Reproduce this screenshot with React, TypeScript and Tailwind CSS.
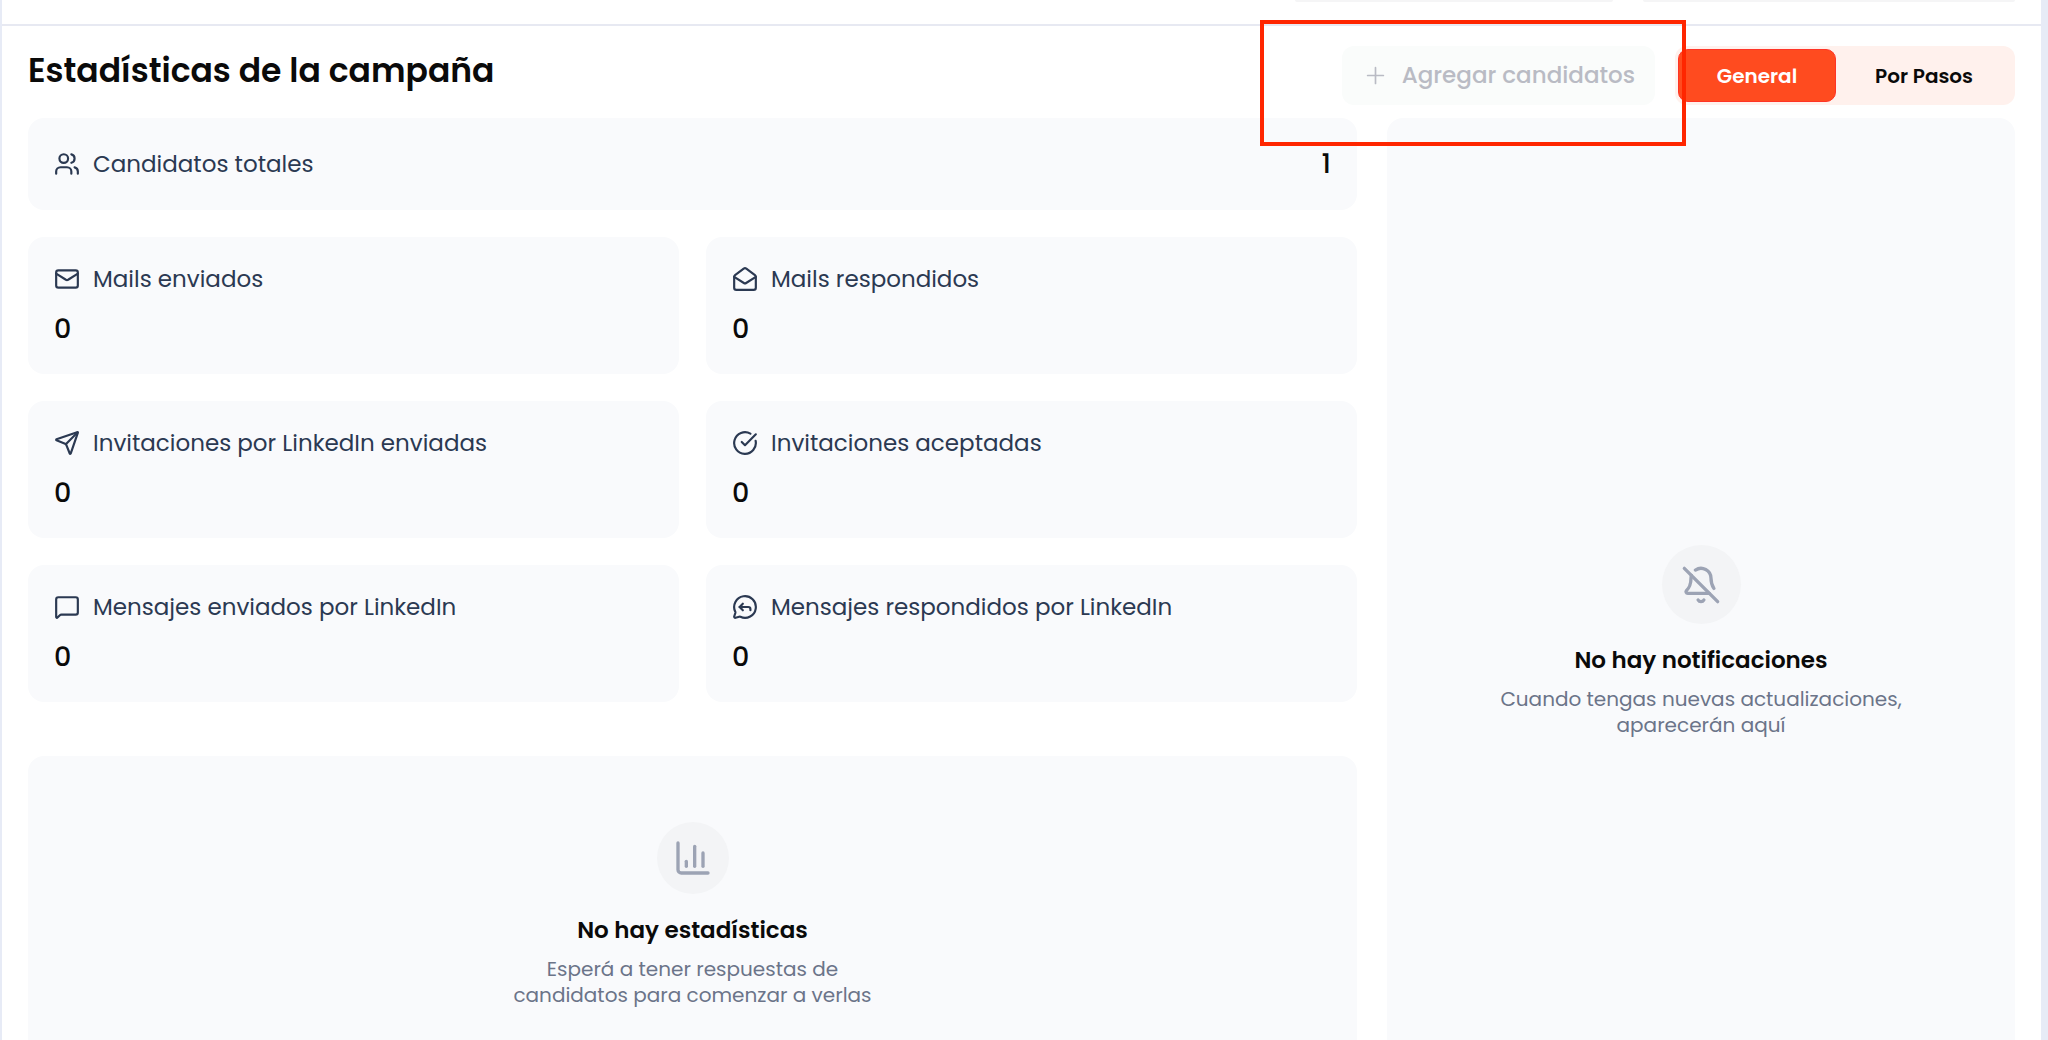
import React from 'react'
import {
  BellOff,
  ChartColumn,
  CircleCheckBig,
  type LucideIcon,
  Mail,
  MailOpen,
  MessageCircleReply,
  MessageSquare,
  Plus,
  Send,
  Users,
} from 'lucide-react'

type StatType = { label: string; value: number; icon: LucideIcon }

const stats: StatType[] = [
  { label: 'Mails enviados', value: 0, icon: Mail },
  { label: 'Mails respondidos', value: 0, icon: MailOpen },
  { label: 'Invitaciones por LinkedIn enviadas', value: 0, icon: Send },
  { label: 'Invitaciones aceptadas', value: 0, icon: CircleCheckBig },
  { label: 'Mensajes enviados por LinkedIn', value: 0, icon: MessageSquare },
  { label: 'Mensajes respondidos por LinkedIn', value: 0, icon: MessageCircleReply },
]

function StatLabel({ label, icon: Icon }: { label: string; icon: LucideIcon }) {
  return (
    <div className="flex items-center gap-[13px] text-[#2b3952]">
      <Icon size={26} strokeWidth={2} />
      <h3 className="text-[23px] leading-9">{label}</h3>
    </div>
  )
}

function StatCard({ label, value, icon }: StatType) {
  return (
    <div className="rounded-2xl bg-[#f9fafc] px-[26px] pt-6 pb-[26px]">
      <StatLabel label={label} icon={icon} />
      <p className="mt-[13px] text-[27px] leading-[38px] font-medium text-neutral-950">{value}</p>
    </div>
  )
}

export default function App() {
  return (
    <div className="h-screen overflow-hidden border-l-2 border-r-[7px] border-[#e7ebf6] bg-white font-['Poppins','Inter',sans-serif]">
      {/* bottom edge of the filters row */}
      <div className="flex h-[26px] items-start justify-end gap-[30px] border-b-2 border-[#e7e9f2] pr-[26px]">
        <div className="h-[2px] w-[318px] rounded-b-2xl bg-[#f5f5f6]" />
        <div className="h-[2px] w-[372px] rounded-b-2xl bg-[#f5f5f6]" />
      </div>

      <main className="px-[26px] pt-5">
        <header className="flex items-start justify-between">
          <h1 className="pt-1 text-[33px] leading-[42px] font-semibold text-neutral-950">Estadísticas de la campaña</h1>
          <div className="relative flex gap-5">
            <button
              disabled
              className="flex h-[59px] items-center gap-[13px] rounded-xl bg-[#fafcfb] px-5 text-[23px] font-medium text-[#b9bbc4]"
            >
              <Plus size={27} strokeWidth={1.5} />
              Agregar candidatos
            </button>
            <div className="grid h-[59px] w-[340px] grid-cols-[158px_1fr] rounded-xl bg-[#fff1ed] p-[3px] text-[20px] font-semibold">
              <button className="rounded-[10px] border border-[#ff3426] bg-[#ff4b1f] text-white">General</button>
              <button className="text-neutral-950">Por Pasos</button>
            </div>
            <div className="pointer-events-none absolute -top-[26px] right-[329px] h-[126px] w-[426px] border-4 border-[#ff2600]" />
          </div>
        </header>

        <div className="mt-[13px] grid grid-cols-[1329fr_628fr] gap-[30px]">
          <section className="pb-[91px]">
            <div className="flex items-center justify-between rounded-2xl bg-[#f9fafc] px-[26px] py-7">
              <StatLabel label="Candidatos totales" icon={Users} />
              <p className="text-[27px] leading-9 font-medium text-neutral-950">1</p>
            </div>

            <div className="mt-[27px] grid grid-cols-2 gap-[27px]">
              {stats.map((stat) => (
                <StatCard key={stat.label} {...stat} />
              ))}
            </div>

            <div className="mt-[54px] flex flex-col items-center rounded-2xl bg-[#f9fafc] py-[66px] text-center">
              <div className="flex size-[72px] items-center justify-center rounded-full bg-[#f3f4f6] text-[#9ca3b4]">
                <ChartColumn size={40} />
              </div>
              <h2 className="mt-[18px] text-[23px] leading-9 font-semibold text-neutral-950">No hay estadísticas</h2>
              <p className="mt-2 w-[360px] text-[20px] leading-[26px] text-[#6b7489]">
                Esperá a tener respuestas de candidatos para comenzar a verlas
              </p>
            </div>
          </section>

          <aside className="flex flex-col items-center justify-center rounded-2xl bg-[#f9fafc] text-center">
            <div className="flex size-[79px] items-center justify-center rounded-full bg-[#f3f4f6] text-[#9ca3b4]">
              <BellOff size={40} />
            </div>
            <h2 className="mt-[18px] text-[23px] leading-9 font-semibold text-neutral-950">No hay notificaciones</h2>
            <p className="mt-2 w-[420px] text-[20px] leading-[26px] text-[#6b7489]">
              Cuando tengas nuevas actualizaciones, aparecerán aquí
            </p>
          </aside>
        </div>
      </main>
    </div>
  )
}
